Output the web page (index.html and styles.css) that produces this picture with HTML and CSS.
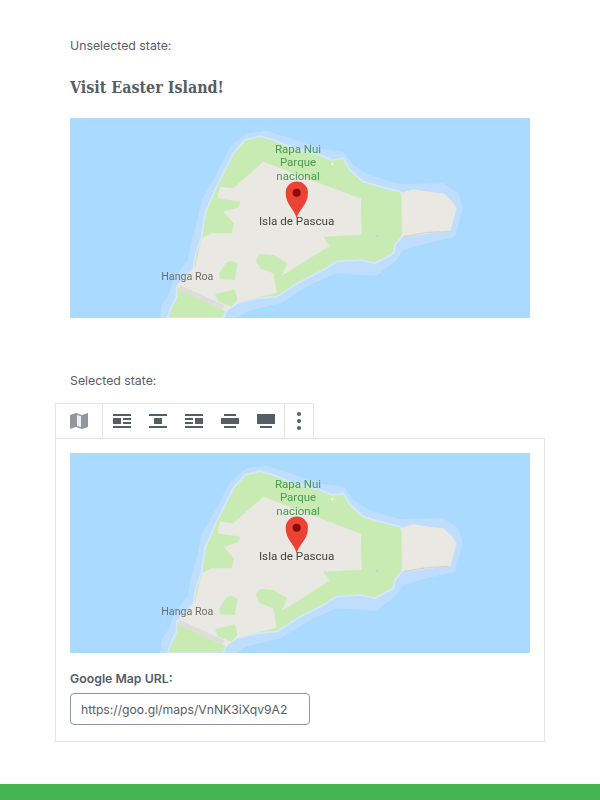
FILE: index.html
```html
<!DOCTYPE html>
<html lang="en">
<head>
  <meta charset="UTF-8">
  <title>Google Map block</title>
  <link rel="stylesheet" href="styles.css">
</head>
<body>

<svg class="defs" width="0" height="0">
  <symbol id="island" viewBox="30 24 1380 600">
    <rect x="30" y="24" width="1380" height="600" fill="#aadaff"/>
    <g class="land">
      <path fill="#bfdefe" d="M300 624 L305 585 L330 545 L345 500 L385 450 L392 400 L410 340 L425 270 L470 190 L510 110 L560 70 L620 62 L690 85 L790 118 L850 125 L880 165 L925 195 L1020 222 L1150 220 L1195 250 L1208 295 L1185 380 L1100 400 L1030 420 L1010 450 L950 497 L830 490 L760 520 L660 580 L560 605 L530 624 Z"/>
      <path fill="#c8ebb4" stroke="#d3e8fb" stroke-width="5" d="M322 624 L335 590 L350 560 L350 530 L400 475 L408 430 L425 380 L435 310 L465 240 L490 190 L520 130 L555 90 L600 78 L640 90 L700 115 L780 135 L815 150 L850 145 L870 180 L910 215 L960 230 L1020 245 L1060 300 L1022 385 L1005 405 L1000 430 L945 460 L900 450 L830 455 L790 480 L720 515 L650 560 L590 565 L530 580 L500 600 L490 624 Z"/>
      <path fill="#e9e8e3" d="M610 155 L520 235 L480 230 L472 265 L542 275 L535 292 L490 305 L522 340 L515 370 L455 370 L425 385 L406 470 L350 530 L495 603 L520 590 L530 578 L650 548 L640 490 L600 475 L588 450 L600 432 L640 435 L682 460 L665 497 L750 445 L808 408 L790 380 L905 374 L903 266 Z"/>
      <path fill="none" stroke="#dedddb" stroke-width="14" d="M358 532 L490 592"/>
      <path fill="#c8ebb4" d="M465 552 L525 538 L532 570 L515 590 L475 575 Z"/>
      <path fill="#c8ebb4" d="M497 460 Q515 445 532 462 L525 510 L480 508 L478 490 Z"/>
      <path fill="#e9e8e3" d="M1024 248 L1060 238 L1110 246 L1150 250 L1175 272 L1190 295 L1182 325 L1172 362 L1100 372 L1026 382 Z"/>
      <path fill="none" stroke="#d8d3c8" stroke-width="4" d="M1030 380 L1100 368 L1165 364"/>
      <circle cx="950" cy="378" r="4" fill="#aadaff"/>
      <circle cx="817" cy="162" r="4" fill="#fbf2cf"/>
    </g>
  </symbol>
  <symbol id="marker" viewBox="30 24 1380 600">
    <path fill="#ea4335" d="M710 325 C703 295 677 285 677 248 A33 33 0 0 1 744 248 C744 285 717 295 710 325 Z"/>
    <circle cx="710" cy="248" r="12" fill="#8b0a06"/>
  </symbol>
</svg>

<div class="page">
  <p class="note">Unselected state:</p>
  <h2 class="title">Visit Easter Island!</h2>
  <svg class="map" viewBox="30 24 1380 600">
    <use href="#island" x="30" y="24" width="1380" height="600"/>
    <text class="park" x="714" y="129">Rapa Nui</text>
    <text class="park" x="714" y="169">Parque</text>
    <text class="park" x="714" y="209">nacional</text>
    <text class="place" x="710" y="346">Isla de Pascua</text>
    <text class="town" x="382" y="509">Hanga Roa</text>
    <use href="#marker" x="30" y="24" width="1380" height="600"/>
  </svg>

  <p class="note note-selected">Selected state:</p>
  <div class="toolbar">
    <div class="tool-group tool-map">
      <svg class="icon" viewBox="0 0 18 16"><path fill="#8f98a1" d="M0 2 L6 0 L12 2 L18 0 L18 14 L12 16 L6 14 L0 16 Z"/><path fill="#eef0f1" d="M7 2 L11 3 L11 14 L7 13 Z"/></svg>
    </div>
    <div class="tool-group tool-align">
      <svg class="icon" viewBox="0 0 18 14"><path d="M0 0h18v2H0zM0 4h8v6H0zM10 4h8v2h-8zM10 8h8v2h-8zM0 12h18v2H0z"/></svg>
      <svg class="icon" viewBox="0 0 18 14"><path d="M0 0h18v2H0zM5 4h8v6H5zM0 12h18v2H0z"/></svg>
      <svg class="icon" viewBox="0 0 18 14"><path d="M0 0h18v2H0zM10 4h8v6h-8zM0 4h8v2H0zM0 8h8v2H0zM0 12h18v2H0z"/></svg>
      <svg class="icon" viewBox="0 0 18 14"><path d="M3 0h12v2H3zM0 4h18v6H0zM3 12h12v2H3z"/></svg>
      <svg class="icon" viewBox="0 0 18 14"><path d="M0 0h18v10H0zM3 12h12v2H3z"/></svg>
    </div>
    <div class="tool-group tool-more">
      <svg class="dots" viewBox="0 0 4 18"><circle cx="2" cy="2" r="2"/><circle cx="2" cy="9" r="2"/><circle cx="2" cy="16" r="2"/></svg>
    </div>
  </div>
  <div class="block">
    <svg class="map" viewBox="30 24 1380 600">
      <use href="#island" x="30" y="24" width="1380" height="600"/>
      <text class="park" x="714" y="129">Rapa Nui</text>
      <text class="park" x="714" y="169">Parque</text>
      <text class="park" x="714" y="209">nacional</text>
      <text class="place" x="710" y="346">Isla de Pascua</text>
      <text class="town" x="382" y="509">Hanga Roa</text>
      <use href="#marker" x="30" y="24" width="1380" height="600"/>
    </svg>
    <label class="url-label" for="url">Google Map URL:</label>
    <input class="url-input" id="url" type="text" value="https://goo.gl/maps/VnNK3iXqv9A2">
  </div>
</div>

<div class="footer-bar"></div>

</body>
</html>
```

FILE: styles.css
```css
* {
  margin: 0;
  padding: 0;
  box-sizing: border-box;
}

body {
  font-family: Inter, "Liberation Sans", sans-serif;
  color: #555d66;
  background: #fff;
  height: 800px;
  overflow: hidden;
  display: flex;
  flex-direction: column;
}

.defs {
  display: block;
}

.page {
  flex: 1;
  padding: 38px 70px 0;
}

.note {
  font-size: 12.3px;
  line-height: 16px;
}

.note-selected {
  margin-top: 55px;
}

.title {
  font-family: "DejaVu Serif Condensed", "DejaVu Serif", serif;
  font-size: 15.9px;
  line-height: 22px;
  font-weight: 700;
  margin: 23px 0 19px;
}

.map {
  display: block;
  width: 460px;
  height: 200px;
}

.land {
  filter: blur(1.5px);
}

.park,
.place,
.town {
  font-family: Roboto, sans-serif;
  text-anchor: middle;
  filter: blur(0.8px);
}

.park {
  font-size: 34.5px;
  fill: #4a9a50;
}

.place {
  font-size: 35px;
  fill: #444;
}

.town {
  font-size: 32px;
  fill: #6e6e6e;
}

.toolbar {
  display: flex;
  width: 259px;
  height: 35px;
  margin: 14px 0 0 -15px;
  border: 1px solid #e2e4e7;
  border-bottom: none;
}

.tool-group {
  display: flex;
  align-items: center;
  justify-content: center;
}

.tool-map {
  width: 47px;
  border-right: 1px solid #e2e4e7;
}

.tool-align {
  width: 182px;
  gap: 18px;
  border-right: 1px solid #e2e4e7;
}

.tool-more {
  flex: 1;
}

.icon {
  width: 18px;
  height: 14px;
  fill: #555d66;
}

.tool-map .icon {
  height: 16px;
}

.dots {
  width: 4px;
  height: 18px;
  fill: #555d66;
}

.block {
  width: 490px;
  height: 304px;
  margin-left: -15px;
  padding: 14px;
  border: 1px solid #e2e4e7;
}

.url-label {
  display: block;
  font-size: 12.3px;
  line-height: 16px;
  font-weight: 600;
  margin: 18px 0 6px;
}

.url-input {
  display: block;
  width: 240px;
  height: 32px;
  padding: 0 10px;
  font-family: Inter, sans-serif;
  font-size: 12.2px;
  color: #555d66;
  border: 1px solid #8d96a0;
  border-radius: 4px;
  background: #fff;
}

.footer-bar {
  height: 16px;
  background: #46b450;
}
```
